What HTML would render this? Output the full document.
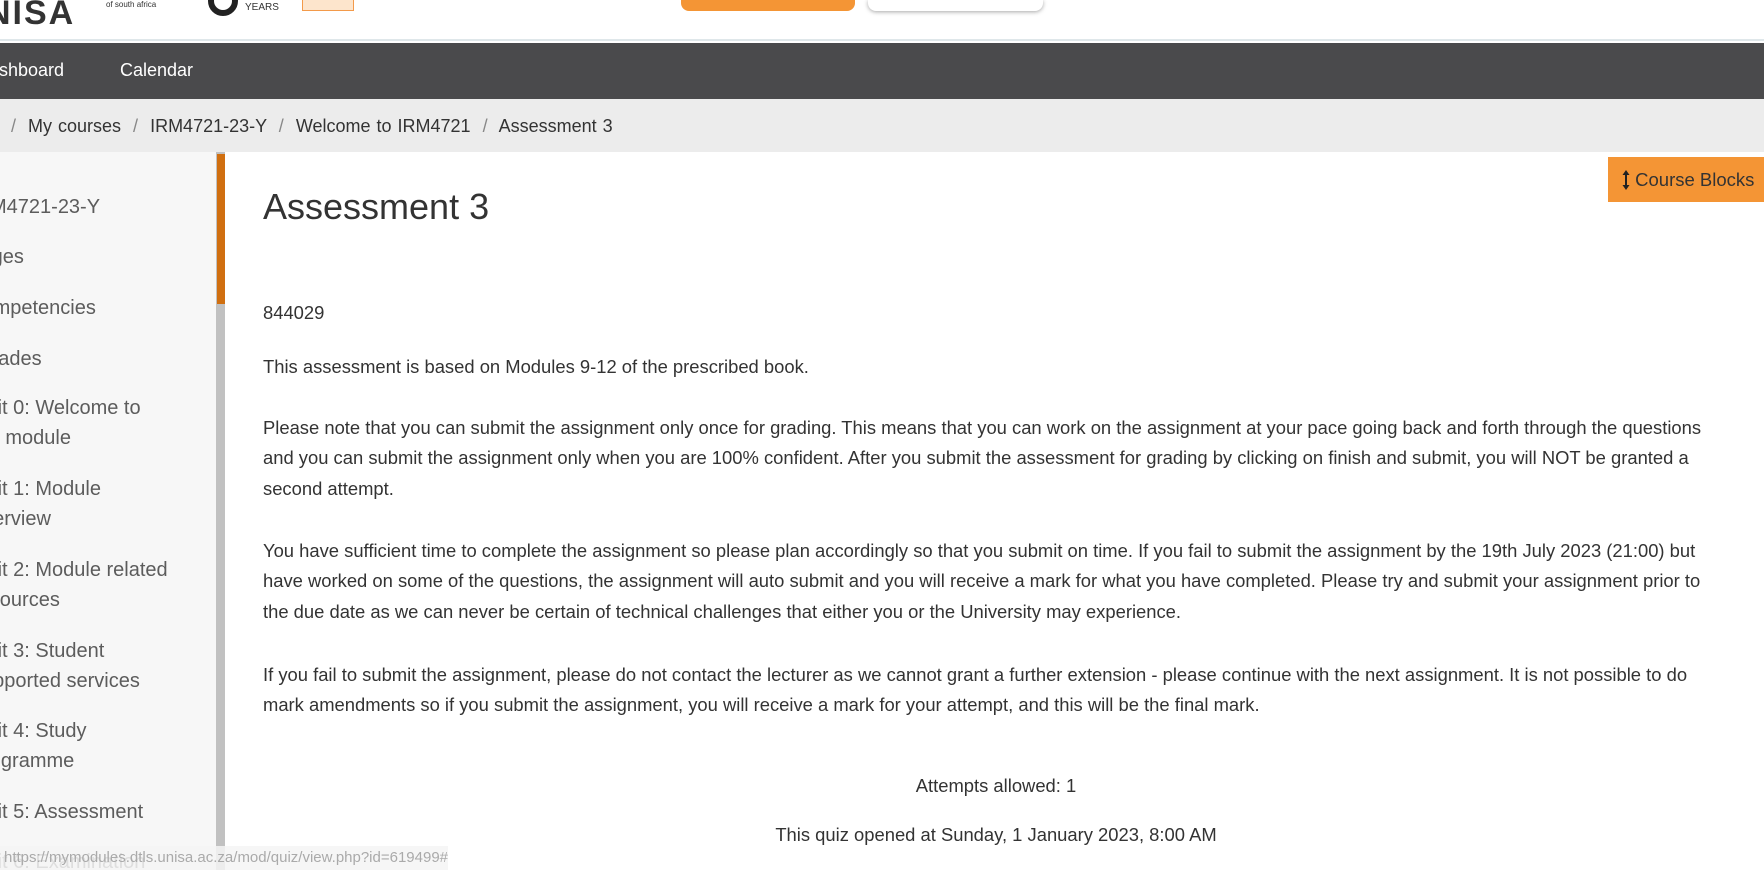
<!DOCTYPE html>
<html><head><meta charset="utf-8"><style>
*{margin:0;padding:0;box-sizing:border-box}
body{width:1764px;height:870px;overflow:hidden;position:relative;background:#fff;font-family:"Liberation Sans",sans-serif;color:#333}
.abs{position:absolute}
#hdr{left:0;top:0;width:1764px;height:41px;background:#fff;border-bottom:2px solid #dfe7ea}
#nav{left:0;top:43px;width:1764px;height:56px;background:#4a4a4c;color:#fff;font-size:18px}
#bc{left:0;top:99px;width:1764px;height:53px;background:#ececec;font-size:18px;color:#333}
#side{left:0;top:152px;width:216px;height:718px;background:#f7f7f7;color:#5c5c5c;font-size:20px;overflow:hidden}
#side div{position:absolute;left:0;line-height:30px;white-space:nowrap}
#sb{left:216px;top:152px;width:9px;height:718px;background:#c1c1c1}
#thumb{left:217px;top:154px;width:8px;height:150px;background:#d06f10}
p{position:absolute;left:263px;width:1465px;font-size:18.4px;line-height:30.3px;color:#333}
</style></head><body>
<div class="abs" id="hdr"></div>
<div class="abs" style="left:-14px;top:-6px;font-size:34px;font-weight:bold;color:#333;letter-spacing:2px">NISA</div>
<div class="abs" style="left:106px;top:0;font-size:8px;color:#333">of south africa</div>
<div class="abs" style="left:208px;top:-14px;width:30px;height:30px;border-radius:50%;border:6px solid #222"></div>
<div class="abs" style="left:245px;top:2px;font-size:10px;color:#333">YEARS</div>
<div class="abs" style="left:302px;top:0;width:52px;height:11px;background:#fde5cc;border:1px solid #f39a4a;border-top:none"></div>
<div class="abs" style="left:681px;top:0;width:174px;height:11px;background:#f49535;border-radius:0 0 8px 8px"></div>
<div class="abs" style="left:868px;top:0;width:175px;height:11px;background:#fff;border-radius:0 0 8px 8px;box-shadow:0 1px 4px rgba(0,0,0,.35)"></div>
<div class="abs" id="nav"><span class="abs" style="left:-24px;top:17px">Dashboard</span><span class="abs" style="left:120px;top:17px">Calendar</span></div>
<div class="abs" id="bc"><span class="abs" style="left:11px;top:17px;white-space:nowrap;word-spacing:1px"><span style="color:#888">/</span>&nbsp; My courses &nbsp;<span style="color:#888">/</span>&nbsp; IRM4721-23-Y &nbsp;<span style="color:#888">/</span>&nbsp; Welcome to IRM4721 &nbsp;<span style="color:#888">/</span>&nbsp; Assessment 3</span></div>
<div class="abs" id="side">
<div style="top:40px;left:-30px">IRM4721-23-Y</div>
<div style="top:90px;left:-44px">Badges</div>
<div style="top:141px;left:-32px">Competencies</div>
<div style="top:192px;left:-24px">Grades</div>
<div style="top:241px;left:-28px">Unit 0: Welcome to<br>the module</div>
<div style="top:322px;left:-28px">Unit 1: Module<br>overview</div>
<div style="top:403px;left:-28px">Unit 2: Module related<br>resources</div>
<div style="top:484px;left:-28px">Unit 3: Student<br>supported services</div>
<div style="top:564px;left:-28px">Unit 4: Study<br>programme</div>
<div style="top:645px;left:-28px">Unit 5: Assessment</div>
<div style="top:695px;left:-28px">Unit 6: Examination</div>
</div>
<div class="abs" id="sb"></div><div class="abs" id="thumb"></div>
<div class="abs" style="left:1608px;top:157px;width:156px;height:45px;background:#f49535;color:#333;font-size:18.5px;line-height:45px;padding-left:14px;white-space:nowrap"><svg width="8" height="22" viewBox="0 0 8 22" style="vertical-align:-5px"><path d="M4 1 L7.5 6 H5 V16 H7.5 L4 21 L0.5 16 H3 V6 H0.5 Z" fill="#222"/></svg> Course Blocks</div>
<div class="abs" style="left:263px;top:186px;font-size:36px;font-weight:300;color:#333">Assessment 3</div>
<p style="top:298px">844029</p>
<p style="top:352px">This assessment is based on Modules 9-12 of the prescribed book.</p>
<p style="top:413px">Please note that you can submit the assignment only once for grading. This means that you can work on the assignment at your pace going back and forth through the questions and you can submit the assignment only when you are 100% confident. After you submit the assessment for grading by clicking on finish and submit, you will NOT be granted a second attempt.</p>
<p style="top:536px">You have sufficient time to complete the assignment so please plan accordingly so that you submit on time. If you fail to submit the assignment by the 19th July 2023 (21:00) but have worked on some of the questions, the assignment will auto submit and you will receive a mark for what you have completed. Please try and submit your assignment prior to the due date as we can never be certain of technical challenges that either you or the University may experience.</p>
<p style="top:660px">If you fail to submit the assignment, please do not contact the lecturer as we cannot grant a further extension - please continue with the next assignment. It is not possible to do mark amendments so if you submit the assignment, you will receive a mark for your attempt, and this will be the final mark.</p>
<p style="top:771px;text-align:center;width:1466px">Attempts allowed: 1</p>
<p style="top:820px;text-align:center;width:1466px">This quiz opened at Sunday, 1 January 2023, 8:00 AM</p>
<div class="abs" style="left:0;top:846px;width:448px;height:24px;background:rgba(245,245,245,.85);color:#aaa;font-size:15px;line-height:24px;padding-left:4px;white-space:nowrap;overflow:hidden">https://mymodules.dtls.unisa.ac.za/mod/quiz/view.php?id=619499#studentdashslider</div>
</body></html>
